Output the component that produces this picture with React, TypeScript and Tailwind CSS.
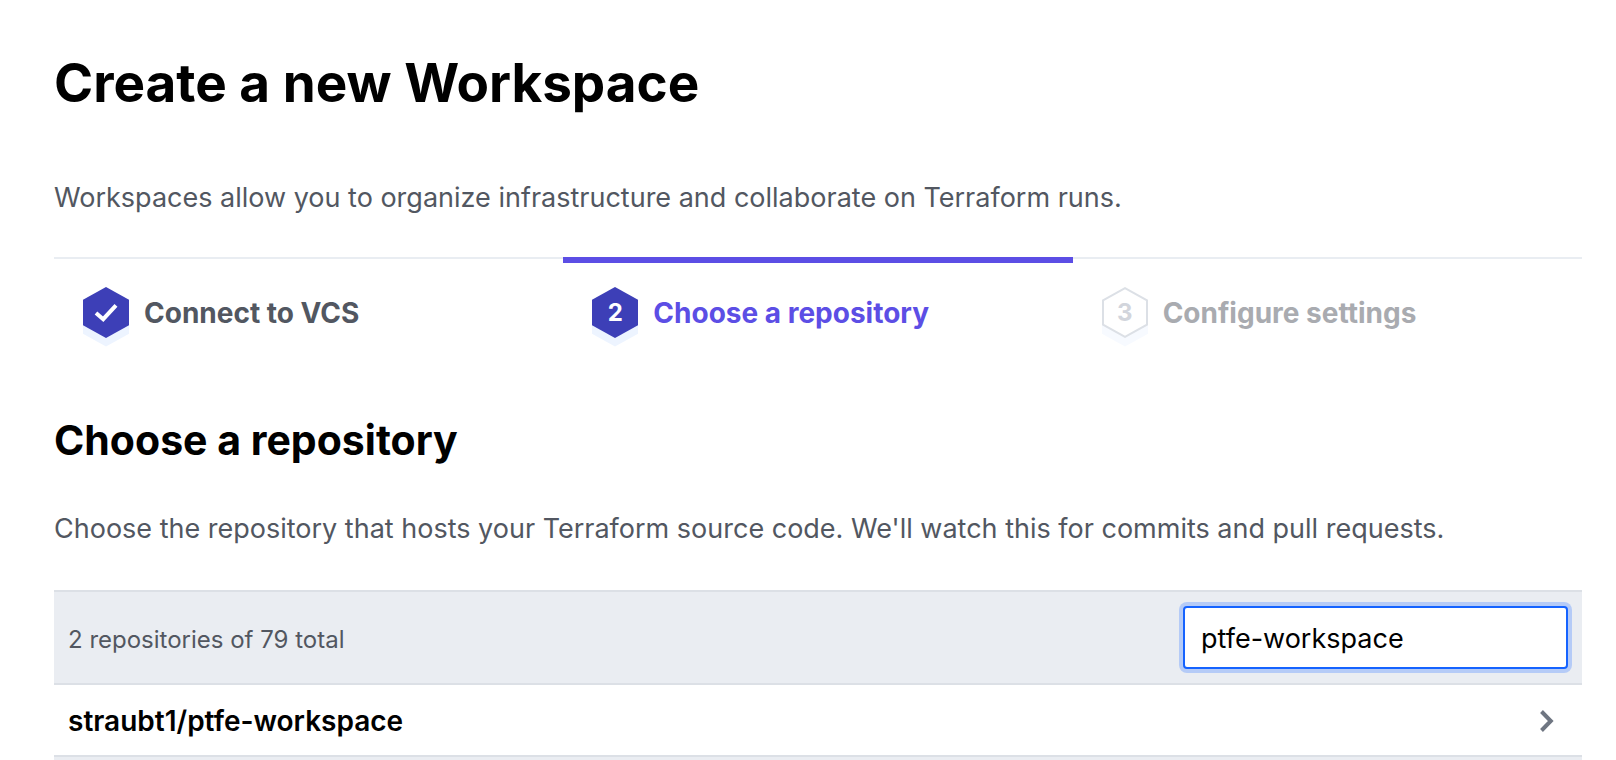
import { useState } from "react";

type StepState = "done" | "active" | "upcoming";

const steps: { number: number; label: string; state: StepState }[] = [
  { number: 1, label: "Connect to VCS", state: "done" },
  { number: 2, label: "Choose a repository", state: "active" },
  { number: 3, label: "Configure settings", state: "upcoming" },
];

const labelColor: Record<StepState, string> = {
  done: "text-[#525761]",
  active: "text-[#5c4ee5]",
  upcoming: "text-[#a9abb0]",
};

function StepBadge({ number, state }: { number: number; state: StepState }) {
  const upcoming = state === "upcoming";
  return (
    <span className="relative flex h-[60px] w-[46px] shrink-0">
      <svg viewBox="0 0 46 60" className="h-[60px] w-[46px]" aria-hidden="true">
        <path d="M0 20.8 23 8l23 12.8v26L23 59.5 0 46.8z" fill={upcoming ? "#f7faff" : "#edf4ff"} />
        {upcoming ? (
          <path d="M1 13.3 23 1.2l22 12.1v24.4L23 49.8 1 37.7z" fill="#fff" stroke="#dce0e6" strokeWidth="2" />
        ) : (
          <path d="M0 12.8 23 0l23 12.8v25.4L23 51 0 38.2z" fill="#3d3fb7" />
        )}
        {state === "done" && (
          <path d="M13 26l7.2 6.2L33 18.4" fill="none" stroke="#fff" strokeWidth="4" />
        )}
      </svg>
      {state !== "done" && (
        <span
          className={`absolute inset-x-0 top-0 text-center text-[24px] leading-[51px] font-bold ${
            upcoming ? "text-[#d2d5dc]" : "text-white"
          }`}
        >
          {number}
        </span>
      )}
    </span>
  );
}

export default function App() {
  const [query, setQuery] = useState("ptfe-workspace");

  return (
    <main className="bg-white pt-[49px] pr-[34px] pl-[54px] font-['Inter',sans-serif] text-black">
      <h1 className="text-[53px] leading-[68px] font-bold">Create a new Workspace</h1>
      <p className="mt-[60px] text-[27px] leading-[42px] text-[#525761]">
        Workspaces allow you to organize infrastructure and collaborate on Terraform runs.
      </p>

      <ol className="mt-[38px] grid grid-cols-3">
        {steps.map((step) => (
          <li
            key={step.number}
            aria-current={step.state === "active" ? "step" : undefined}
            className={`flex h-[90px] gap-[15px] pl-[29px] ${
              step.state === "active"
                ? "border-t-6 border-[#5c4ee5] pt-[24px]"
                : "border-t-2 border-[#e9edf2] pt-[28px]"
            }`}
          >
            <StepBadge number={step.number} state={step.state} />
            <span className={`text-[28px] leading-[52px] font-bold ${labelColor[step.state]}`}>
              {step.label}
            </span>
          </li>
        ))}
      </ol>

      <h2 className="mt-[68px] text-[41px] leading-[50px] font-bold">Choose a repository</h2>
      <p className="mt-[43px] text-[27px] leading-[42px] text-[#525761]">
        Choose the repository that hosts your Terraform source code. We'll watch this for commits and pull requests.
      </p>

      <section className="mt-[40px]">
        <div className="flex h-[95px] items-baseline justify-between border-y-2 border-[#dce0e6] bg-[#eaedf2] px-[14px] pt-[14px]">
          <span className="text-[24px] text-[#525761]">2 repositories of 79 total</span>
          <input
            type="text"
            aria-label="Filter repositories"
            value={query}
            onChange={(event) => setQuery(event.target.value)}
            className="h-[63px] w-[385px] rounded-[4px] border-2 border-[#1563ff] bg-white px-[16px] pt-[2px] text-[27px] text-black ring-4 ring-[#b5cbf7] outline-none"
          />
        </div>
        <a href="#straubt1/ptfe-workspace" className="flex h-[70px] items-center justify-between pt-[2px] pr-[28px] pl-[14px]">
          <span className="text-[28px] leading-[42px] font-semibold">straubt1/ptfe-workspace</span>
          <svg viewBox="0 0 14 22" className="h-[22px] w-[14px]" fill="none" stroke="#6f7682" strokeWidth="4" aria-hidden="true">
            <path d="M1.5 1.5 10.8 11l-9.3 9.5" />
          </svg>
        </a>
        <div className="h-[5px] border-t-2 border-[#dce0e6] bg-[#eaedf2]" />
      </section>
    </main>
  );
}
